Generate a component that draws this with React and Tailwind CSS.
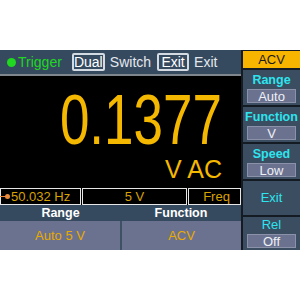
const font = { fontFamily: '"Liberation Sans", Arial, sans-serif' };

const SidePanel = ({ label, value }) => (
  <div className="flex h-[35px] flex-col items-center bg-[#3a4d61] pt-[2px]">
    <div className="text-[12.5px] font-bold leading-[16px] text-[#2ee4ee]">
      {label}
    </div>
    <div className="mt-[1px] flex h-[14px] w-[49px] items-center justify-center border border-[#8a91a8] bg-[#6b7290] text-[13px] leading-none text-[#eef0f6]">
      {value}
    </div>
  </div>
);

export default function App() {
  return (
    <div className="h-[300px] w-[300px] bg-white pt-[50px]" style={font}>
      <div className="flex h-[200px] w-[300px] bg-[#141b22]">
        {/* main screen */}
        <div className="flex w-[241px] flex-col">
          <div className="flex h-[24px] items-center bg-[#354a5f] text-[14px] text-[#e4e8ee]">
            <span className="ml-[7px] h-[9px] w-[9px] rounded-full bg-[#1fd81f]" />
            <span className="ml-[2px] text-[#1fd81f]">Trigger</span>
            <span className="ml-[10px] flex h-[18px] w-[33px] items-center justify-center rounded-[2px] border-2 border-[#d4dae2] text-white">
              Dual
            </span>
            <span className="ml-[5px]">Switch</span>
            <span className="ml-[6px] flex h-[18px] w-[32px] items-center justify-center rounded-[2px] border-2 border-[#d4dae2] text-white">
              Exit
            </span>
            <span className="ml-[5px]">Exit</span>
          </div>
          <div className="h-[2px] bg-[#80868d]" />
          <div className="flex h-[112px] flex-col items-end bg-black pr-[19px] text-[#f5b800]">
            <div className="mt-[14px] h-[46px] origin-top scale-y-[1.32] text-[53px] leading-[46px]">
              0.1377
            </div>
            <div className="mt-[20px] text-[25px] leading-[26px]">V AC</div>
          </div>
          <div className="flex h-[17px] gap-[1px] bg-black text-[13px] leading-none text-[#d9a200]">
            <div className="relative flex w-[81px] items-center border border-[#e6e6e6] pl-[10px]">
              <span className="absolute left-[-1px] top-[7px] h-[1px] w-[6px] bg-[#e88a3a]" />
              <span className="absolute left-[4px] top-[5px] h-[5px] w-[5px] rounded-full bg-[#e88a3a]" />
              50.032 Hz
            </div>
            <div className="flex w-[105px] items-center justify-center border border-[#e6e6e6]">
              5 V
            </div>
            <div className="flex w-[53px] items-center justify-center border border-[#e6e6e6] pl-[4px]">
              Freq
            </div>
          </div>
          <div className="flex h-[16px] bg-[#354a5f] text-[12.5px] font-bold leading-none text-white">
            <div className="flex w-[121px] items-center justify-center">Range</div>
            <div className="flex w-[120px] items-center justify-center">Function</div>
          </div>
          <div className="flex h-[29px] gap-[2px] bg-[#3d5064] text-[13px] leading-none text-[#e8aa00]">
            <div className="flex w-[120px] items-center justify-center bg-[#6b7290]">
              Auto 5 V
            </div>
            <div className="flex w-[119px] items-center justify-center bg-[#6b7290]">
              ACV
            </div>
          </div>
        </div>
        {/* soft keys */}
        <div className="ml-[2px] flex w-[57px] flex-col gap-[2px] pt-[1px]">
          <div className="flex h-[17px] items-center justify-center bg-[#f7b500] text-[13px] text-[#1a1a1a]">
            ACV
          </div>
          <SidePanel label="Range" value="Auto" />
          <SidePanel label="Function" value="V" />
          <SidePanel label="Speed" value="Low" />
          <div className="flex h-[34px] items-center justify-center bg-[#3a4d61] text-[13px] text-[#2ee4ee]">
            Exit
          </div>
          <div className="flex flex-1 flex-col items-center bg-[#3a4d61]">
            <div className="text-[13px] leading-[16px] text-[#2ee4ee]">Rel</div>
            <div className="mt-[1px] flex h-[14px] w-[49px] items-center justify-center border border-[#8a91a8] bg-[#6b7290] text-[13px] leading-none text-[#eef0f6]">
              Off
            </div>
          </div>
        </div>
      </div>
    </div>
  );
}
